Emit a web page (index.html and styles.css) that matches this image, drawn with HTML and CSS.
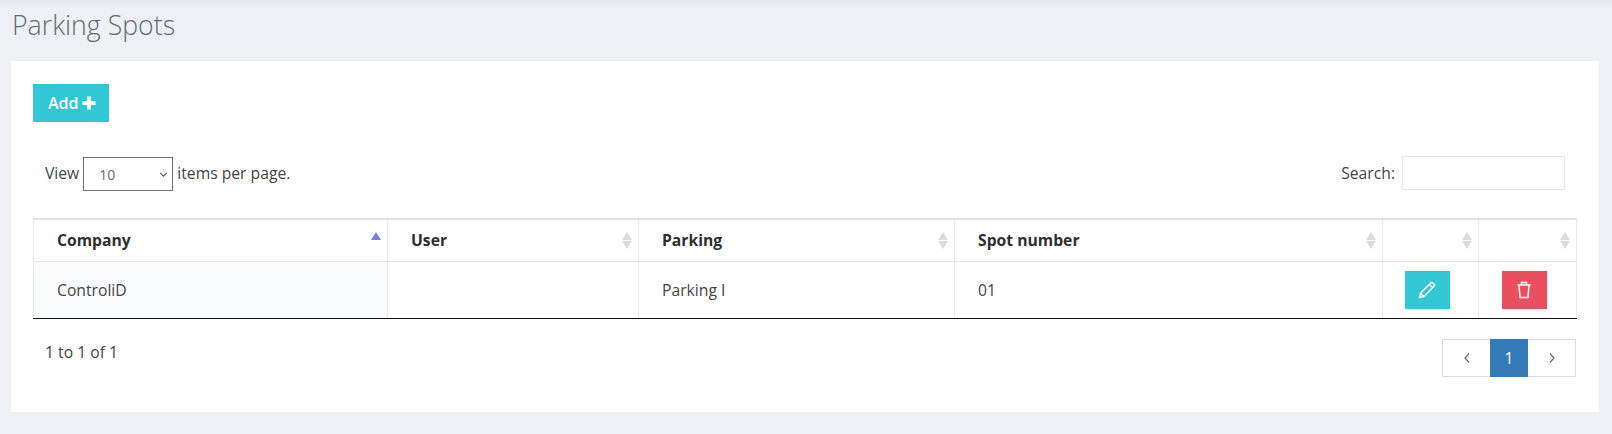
FILE: index.html
```html
<!DOCTYPE html>
<html lang="en">
<head>
<meta charset="utf-8">
<title>Parking Spots</title>
<link rel="stylesheet" href="styles.css">
</head>
<body>
<div class="page-heading"><h1>Parking Spots</h1></div>
<main class="panel">
  <button class="btn-add" type="button">Add <svg class="plus" viewBox="0 0 14 14" aria-hidden="true"><path d="M5 .5h4v4.500h4.500v4H9v4.500H5V9H.5V5H5z"/></svg></button>
  <div class="table-top">
    <label class="length">View
      <span class="select-wrap">
        <select class="length-select"><option>10</option></select>
        <svg class="chevron" viewBox="0 0 10 6" aria-hidden="true"><path d="M1 1l4 4 4-4"/></svg>
      </span>
      items per page.</label>
    <label class="search">Search: <input class="search-input" type="text"></label>
  </div>
  <table class="grid">
    <colgroup>
      <col class="c1"><col class="c2"><col class="c3"><col class="c4"><col class="c5"><col class="c6">
    </colgroup>
    <thead>
      <tr>
        <th class="sorting active">Company<span class="sort"><i class="up"></i></span></th>
        <th class="sorting">User<span class="sort"><i class="up"></i><i class="down"></i></span></th>
        <th class="sorting">Parking<span class="sort"><i class="up"></i><i class="down"></i></span></th>
        <th class="sorting">Spot number<span class="sort"><i class="up"></i><i class="down"></i></span></th>
        <th class="sorting"><span class="sort"><i class="up"></i><i class="down"></i></span></th>
        <th class="sorting"><span class="sort"><i class="up"></i><i class="down"></i></span></th>
      </tr>
    </thead>
    <tbody>
      <tr>
        <td class="sorted">ControliD</td>
        <td></td>
        <td>Parking I</td>
        <td>01</td>
        <td class="action"><button class="icon-btn edit" type="button" aria-label="Edit"><svg viewBox="0 0 18 18" aria-hidden="true"><path d="M1.500 16.500l1-4.300L12.700 2c.6-.6 1.500-.6 2.100 0l1.200 1.200c.6.6.6 1.500 0 2.100L5.800 15.500zM11.300 3.400l3.300 3.300M2.500 12.200l3.300 3.300"/></svg></button></td>
        <td class="action"><button class="icon-btn del" type="button" aria-label="Delete"><svg viewBox="0 0 18 18" aria-hidden="true"><path d="M2.500 4h13M6.500 4V1.500h5V4M4 4l1 12.500h8L14 4"/></svg></button></td>
      </tr>
    </tbody>
  </table>
  <div class="table-bottom">
    <div class="info">1 to 1 of 1</div>
    <nav class="pager">
      <a class="page-link"><svg viewBox="0 0 8 12" aria-hidden="true"><path d="M6 1.500L2 6l4 4.500"/></svg></a>
      <a class="page-link current">1</a>
      <a class="page-link"><svg viewBox="0 0 8 12" aria-hidden="true"><path d="M2 1.500L6 6l-4 4.500"/></svg></a>
    </nav>
  </div>
</main>
</body>
</html>
```
FILE: styles.css
```css
* { box-sizing: border-box; }
html, body { margin: 0; height: 434px; overflow: hidden; }
body {
  background: #edf0f5;
  font-family: "Open Sans", sans-serif;
  font-size: 15.700px;
  color: #444;
  padding: 0 13px 0 11px;
}
.page-heading {
  height: 61px;
  margin: 0 -13px 0 -11px;
  padding: 7px 0 0 12px;
  background: linear-gradient(#e3e6ea 0, #edf0f5 8px);
}
h1 {
  margin: 0;
  font-size: 26.700px;
  font-weight: 300;
  line-height: 36px;
  color: #676a6c;
}
.panel {
  height: 351px;
  background: #fff;
  padding: 23px 23px 0 22px;
}
.btn-add {
  display: flex;
  align-items: center;
  gap: 3px;
  width: 76px;
  height: 38px;
  padding: 0 0 0 15px;
  border: 0;
  background: #33c7d5;
  color: #fff;
  font: 600 16px "Open Sans", sans-serif;
}
.plus { width: 14px; height: 14px; fill: #fff; }
.table-top {
  display: flex;
  justify-content: space-between;
  align-items: center;
  height: 34px;
  margin-top: 34px;
  padding: 0 11px 0 12px;
}
.length { display: flex; align-items: center; gap: 4px; }
.select-wrap { position: relative; display: block; margin-top: 2px; }
.length-select {
  display: block;
  width: 90px;
  height: 34px;
  padding: 0 0 0 15px;
  border: 1px solid #6f6f6f;
  border-radius: 0;
  background: #fff;
  color: #676a6c;
  font: 14px "Open Sans", sans-serif;
  appearance: none;
}
.chevron {
  position: absolute;
  right: 5px;
  top: 15px;
  width: 9px;
  height: 5px;
  fill: none;
  stroke: #555;
  stroke-width: 1.300;
}
.search { display: flex; align-items: center; gap: 7px; }
.search-input {
  width: 163px;
  height: 34px;
  border: 1px solid #e5e6e7;
  background: #fff;
}
.grid {
  width: 1543px;
  margin-top: 28px;
  border-collapse: collapse;
  table-layout: fixed;
  border: 1px solid #e7eaec;
  border-top: 2px solid #dfe2e6;
  border-bottom: 0;
}
.c1 { width: 354px; }
.c2 { width: 251px; }
.c3 { width: 316px; }
.c4 { width: 428px; }
.c5 { width: 96px; }
.c6 { width: 98px; }
th, td {
  border-left: 1px solid #e7eaec;
  border-right: 1px solid #e7eaec;
  padding: 0 0 0 23px;
  text-align: left;
}
th {
  position: relative;
  height: 42px;
  font-weight: 700;
  color: #2f2f2f;
  border-bottom: 1px solid #e7eaec;
}
td { height: 57px; color: #444; border-bottom: 1px solid #111; }
td.sorted { background: #fafbfe; }
td.action { padding: 0 7px 0 0; text-align: center; }
.sort {
  position: absolute;
  right: 6px;
  top: 12px;
  width: 10px;
  height: 18px;
}
.sort i { position: absolute; left: 0; width: 0; height: 0; border-left: 5px solid transparent; border-right: 5px solid transparent; }
.sort .up { top: 0; border-bottom: 8px solid #dcdcdc; }
.sort .down { top: 9px; border-top: 8px solid #dcdcdc; }
.active .sort .up { border-bottom-color: #7f7fdc; }
.icon-btn {
  display: inline-flex;
  align-items: center;
  justify-content: center;
  width: 45px;
  height: 38px;
  padding: 0;
  border: 0;
  vertical-align: middle;
}
.icon-btn svg { width: 18px; height: 18px; fill: none; stroke: #fff; stroke-width: 1.500; }
.edit { background: #33c7d5; }
.del { background: #ea4f5d; }
.table-bottom {
  display: flex;
  justify-content: space-between;
  align-items: flex-start;
  margin-top: 20px;
  padding-left: 12px;
}
.info { line-height: 26px; }
.pager { display: flex; height: 38px; border: 1px solid #dcdcdc; }
.page-link {
  display: flex;
  align-items: center;
  justify-content: center;
  width: 47px;
  color: #666;
}
.page-link svg { width: 8px; height: 12px; fill: none; stroke: #667; stroke-width: 1.200; }
.page-link.current {
  width: 38px;
  margin: -1px 0;
  background: #337ab7;
  color: #fff;
  font-weight: 400;
}
```
